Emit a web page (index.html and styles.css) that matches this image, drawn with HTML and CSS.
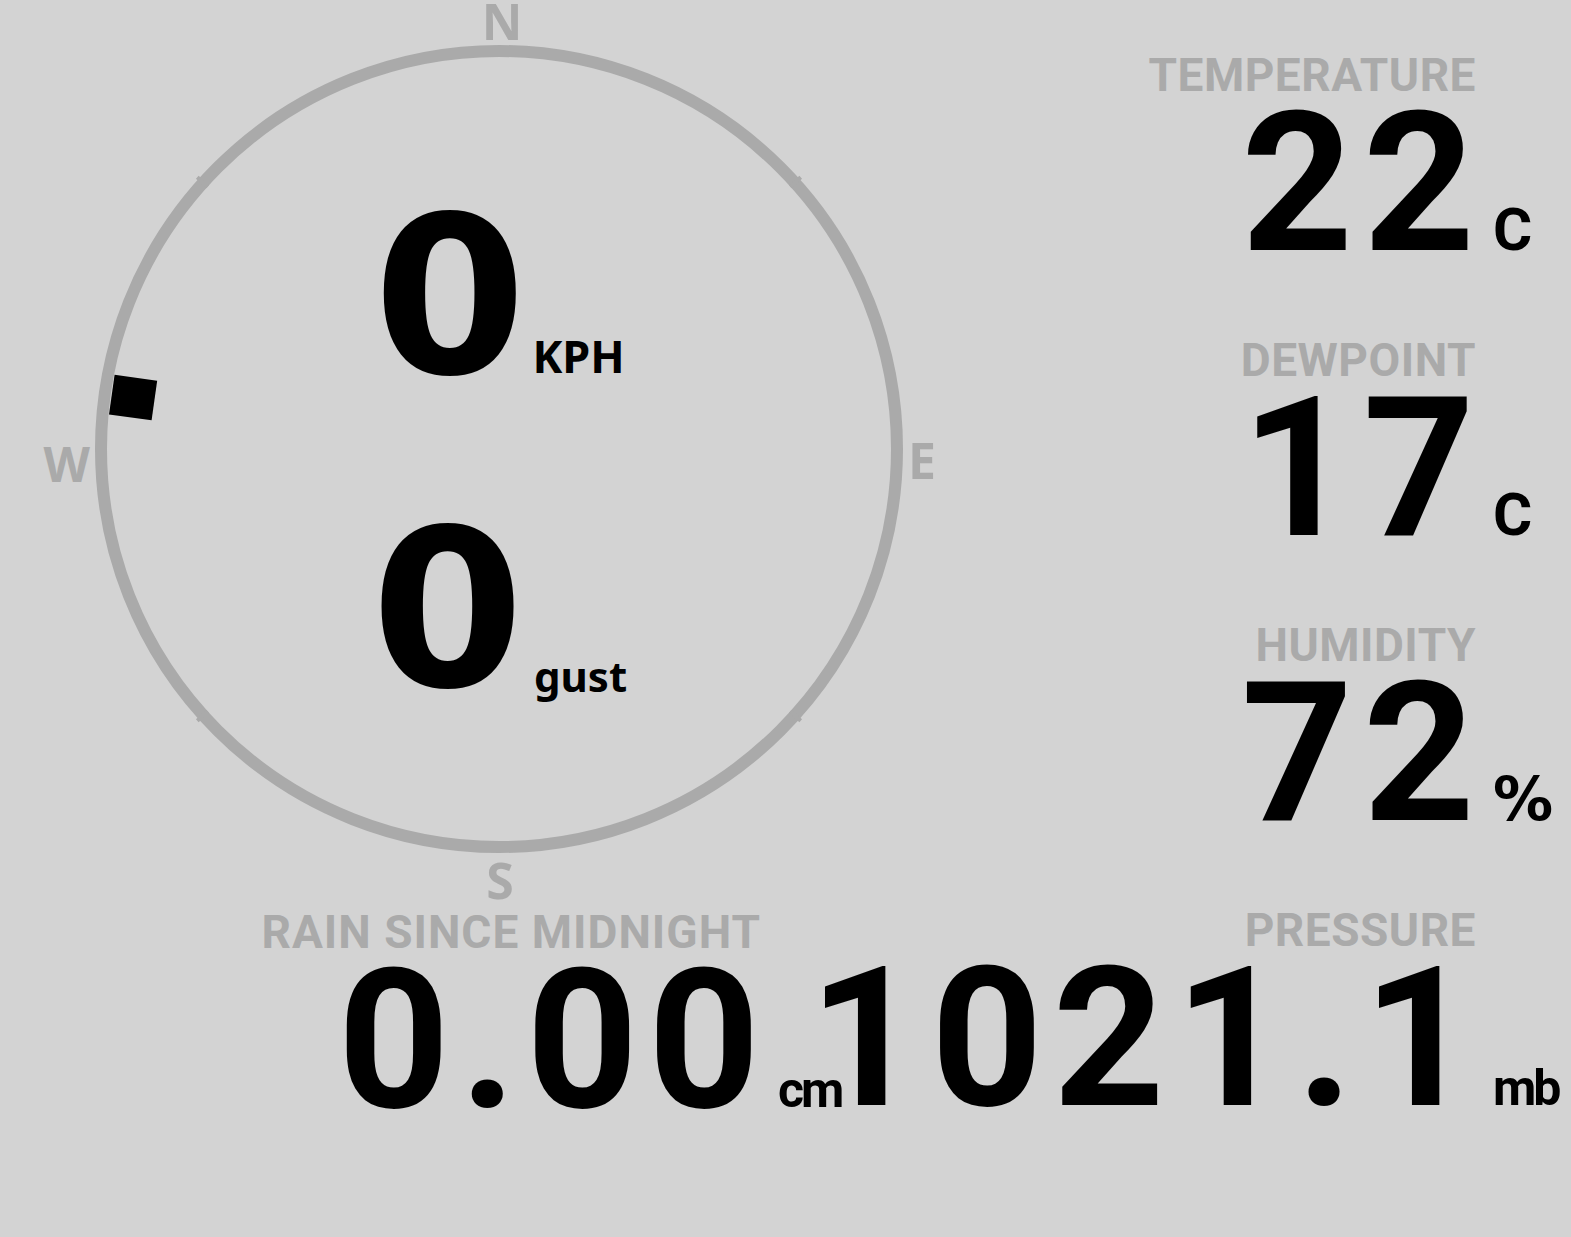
FILE: index.html
```html
<!DOCTYPE html>
<html lang="en">
<head>
    <meta charset="UTF-8">
    <meta name="viewport" content="width=device-width, initial-scale=1.0">
    <title>Weather station</title>
    <link rel="stylesheet" href="styles.css">
</head>
<body>

    <div class="station">
        <div class="left-side">
            <div class="compass">
                <svg class="compass-ring" width="998" height="898" viewBox="0 0 998 898">
                    <circle cx="499" cy="449" r="398" fill="none" stroke="#aaa" stroke-width="12"/>
                    <g transform="translate(499 449)" stroke="#aaa" stroke-width="4">
                        <line x1="0" y1="-392" x2="0" y2="-406" transform="rotate(48)"/>
                        <line x1="0" y1="-392" x2="0" y2="-406" transform="rotate(132)"/>
                        <line x1="0" y1="-392" x2="0" y2="-406" transform="rotate(228)"/>
                        <line x1="0" y1="-392" x2="0" y2="-406" transform="rotate(312)"/>
                    </g>
                    <!-- wind direction, bearing in degrees -->
                    <rect transform="translate(499 449) rotate(278)" x="-20" y="-391" width="40" height="43" fill="#000"/>
                </svg>

                <span class="point point-n">N</span>
                <span class="point point-e">E</span>
                <span class="point point-s">S</span>
                <span class="point point-w">W</span>

                <div class="speed-row"><span class="speed">0</span><span class="speed-unit">KPH</span></div>
                <div class="speed-row"><span class="speed">0</span><span class="speed-unit speed-unit-gust">gust</span></div>
            </div>

            <div class="reading reading-rain">
                <div class="reading-label">RAIN SINCE MIDNIGHT</div>
                <div class="reading-value">
                    <span class="reading-number">0.00</span>
                    <span class="reading-unit reading-unit-small">cm</span>
                </div>
            </div>
        </div>

        <div class="right-side">
            <div class="reading">
                <div class="reading-label">TEMPERATURE</div>
                <div class="reading-value">
                    <span class="reading-number">22</span>
                    <span class="reading-unit">C</span>
                </div>
            </div>

            <div class="reading">
                <div class="reading-label">DEWPOINT</div>
                <div class="reading-value">
                    <span class="reading-number">17</span>
                    <span class="reading-unit">C</span>
                </div>
            </div>

            <div class="reading">
                <div class="reading-label">HUMIDITY</div>
                <div class="reading-value">
                    <span class="reading-number">72</span>
                    <span class="reading-unit reading-unit-percent">%</span>
                </div>
            </div>

            <div class="reading">
                <div class="reading-label">PRESSURE</div>
                <div class="reading-value">
                    <span class="reading-number">1021.1</span>
                    <span class="reading-unit reading-unit-small">mb</span>
                </div>
            </div>
        </div>
    </div>

</body>
</html>
```

FILE: styles.css
```css
/* page */
body {
    margin: 0;
    background: #d3d3d3;
    color: #000;
    font-family: Roboto, "Liberation Sans", sans-serif;
    min-height: 100vh;
    overflow: hidden;
}

.station {
    display: flex;
}

.left-side {
    width: 1100px;
    flex: none;
}

.right-side {
    width: 471px;
    min-width: 0;
    flex: none;
    box-sizing: border-box;
    padding: 52px 8px 0 0;
}

/* wind compass */
.compass {
    position: relative;
    width: 998px;
    height: 898px;
    box-sizing: border-box;
    padding-top: 9px;
    display: flex;
    flex-direction: column;
    align-items: center;
    justify-content: center;
}

.compass-ring {
    position: absolute;
    left: 0;
    top: 0;
    overflow: visible;
}

.point {
    position: absolute;
    font-family: "Noto Sans", sans-serif;
    font-weight: 700;
    font-size: 50px;
    line-height: 40px;
    color: #aaa;
}

.point-n {
    left: 502px;
    top: 1px;
    transform: translateX(-50%);
}

.point-s {
    left: 500px;
    top: 860px;
    transform: translateX(-50%);
}

.point-e {
    left: 908px;
    top: 440px;
}

.point-w {
    left: 90px;
    top: 444px;
    font-size: 48px;
    transform: translateX(-100%);
}

.speed-row {
    font-family: "DejaVu Sans", sans-serif;
    font-weight: 700;
    font-size: 220px;
    line-height: 220px;
    white-space: nowrap;
}

.speed-row + .speed-row {
    margin-top: 93px;
}

.speed-unit {
    font-family: "Noto Sans", sans-serif;
    font-size: 45px;
    line-height: 1;
    margin-left: 6px;
}

.speed-unit-gust {
    font-size: 42px;
    margin-left: 10px;
    vertical-align: -6px;
}

/* readings */
.reading {
    margin-bottom: 73px;
}

.reading-rain {
    width: 848px;
    margin-top: 11px;
}

.reading-label {
    font-weight: 700;
    font-size: 46px;
    line-height: 46px;
    letter-spacing: 0.5px;
    color: #aaa;
    text-align: right;
    margin: 0 87px 6px 0;
    white-space: nowrap;
}

.reading-rain .reading-label {
    letter-spacing: 1px;
}

.reading-value {
    display: flex;
    justify-content: flex-end;
    align-items: baseline;
}

.reading-number {
    font-weight: 700;
    font-size: 195px;
    line-height: 160px;
    letter-spacing: 10px;
    margin-right: -10px;
    white-space: nowrap;
}

.reading-unit {
    width: 70px;
    flex-shrink: 0;
    margin-left: 18px;
    font-weight: 700;
    font-size: 60px;
    line-height: 60px;
}

.reading-unit-small {
    font-size: 50px;
    letter-spacing: -3px;
}

.reading-unit-percent {
    font-family: "DejaVu Sans", sans-serif;
    font-size: 60px;
}
```
